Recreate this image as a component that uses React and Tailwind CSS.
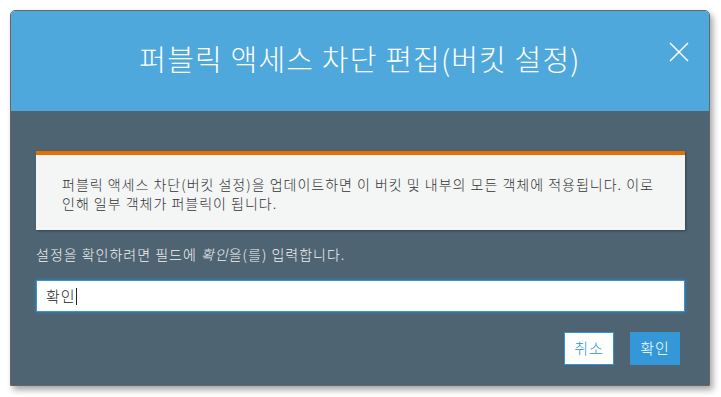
import React from 'react'

const font = { fontFamily: '"Noto Sans CJK KR", "Noto Sans", sans-serif' }

export default function App() {
  return (
    <div className="w-[721px] h-[397px] bg-white pt-[10px] pl-[10px]" style={font}>
      <div className="w-[700px] h-[376px] flex flex-col border border-[#666] rounded-t-[5px] overflow-hidden shadow-[3px_4px_6px_rgba(0,0,0,0.35)]">
        <header className="relative h-[100px] shrink-0 bg-[#4fa8dc] flex items-center justify-center pb-[5px]">
          <h1 className="text-[29px] font-light text-white tracking-[1.2px]">퍼블릭 액세스 차단 편집(버킷 설정)</h1>
          <button className="absolute right-[20px] top-[31px] w-[20px] h-[20px] flex items-center justify-center">
            <svg width="20" height="20" viewBox="0 0 20 20" fill="none" stroke="white" strokeWidth="1.5">
              <path d="M1 1L19 19M19 1L1 19" />
            </svg>
          </button>
        </header>

        <main className="flex-1 bg-[#4e6472] pl-[25px] pr-[24px] pt-[40px]">
          <div className="h-[79px] bg-[#f4f5f5] border-t-4 border-[#e57000] pl-[26px] pr-[24px] pt-[20px] text-[14px] font-light leading-[19px] tracking-[1px] text-[#333] shadow-[1px_1px_2px_rgba(0,0,0,0.35)]">
            퍼블릭 액세스 차단(버킷 설정)을 업데이트하면 이 버킷 및 내부의 모든 객체에 적용됩니다. 이로 인해 일부 객체가 퍼블릭이 됩니다.
          </div>

          <p className="mt-[15px] text-[14px] font-light leading-[19px] tracking-[1px] text-[#f2f2f2]">
            설정을 확인하려면 필드에 <i>확인</i>을(를) 입력합니다.
          </p>

          <div className="mt-[16px] h-[32px] bg-white border border-[#2e95d6] shadow-[0_0_4px_rgba(46,149,214,0.6)] flex items-center pl-[9px] text-[15px] font-light tracking-[1px] text-[#222]">
            확인<span className="w-px h-[17px] bg-[#222]" />
          </div>

          <div className="mt-[20px] flex justify-end gap-[16px] pr-[5px]">
            <button className="w-[50px] h-[33px] bg-white border border-[#2e95d6] text-[#2e95d6] text-[15px] font-light tracking-[1px]">취소</button>
            <button className="w-[50px] h-[33px] bg-[#3498d8] text-white text-[15px] font-light tracking-[1px]">확인</button>
          </div>
        </main>
      </div>
    </div>
  )
}
